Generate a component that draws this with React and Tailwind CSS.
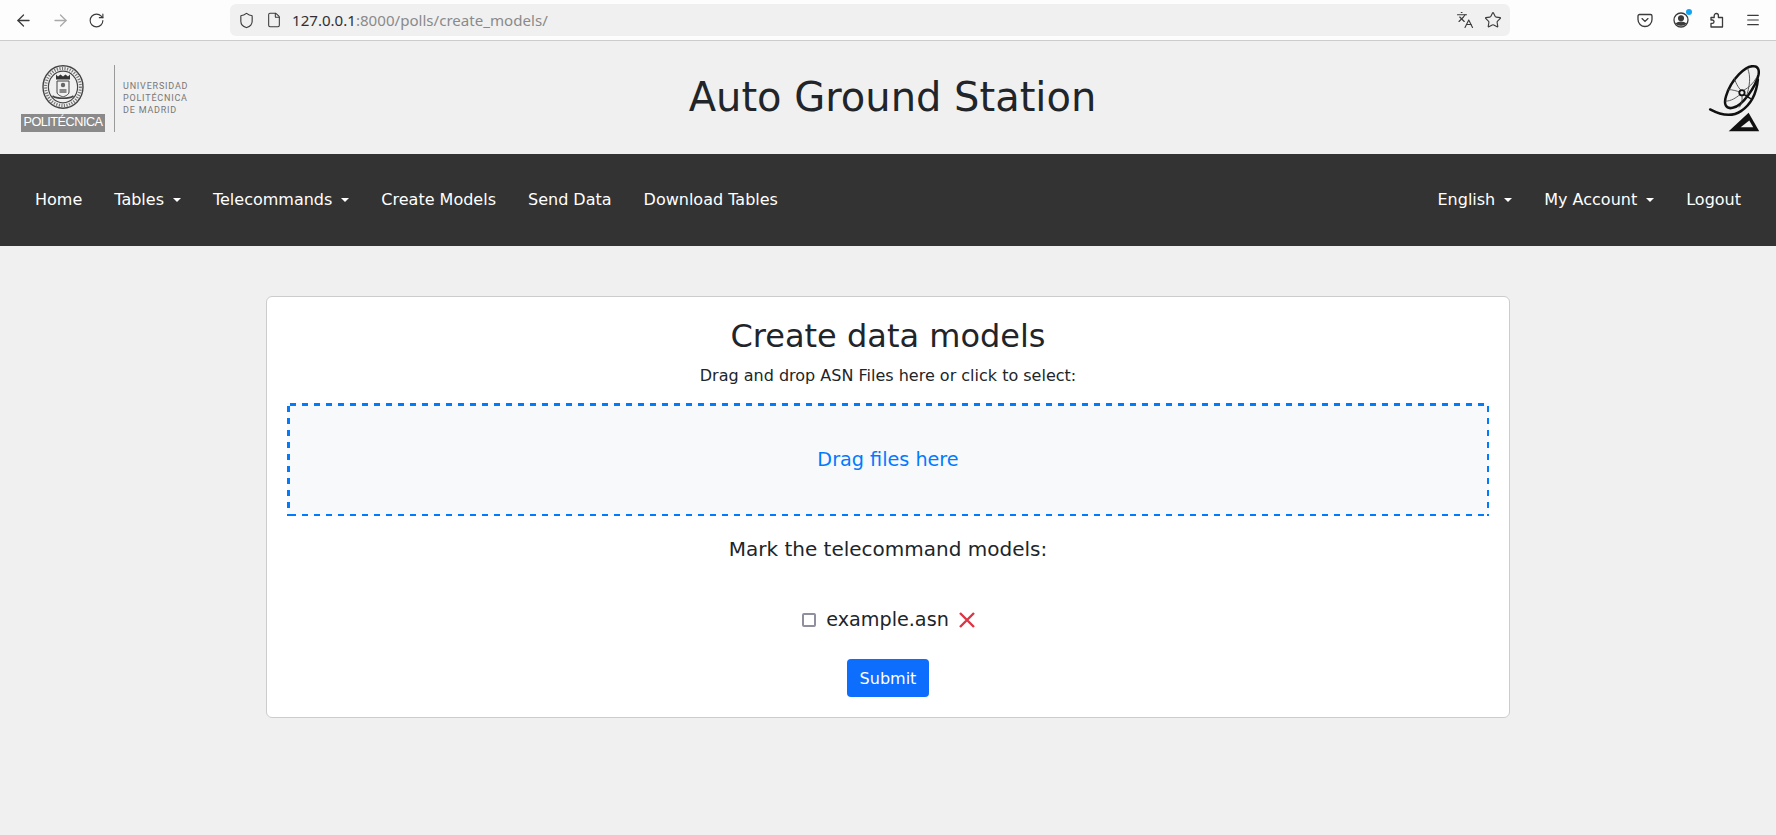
import React from 'react';
import { ArrowLeft, ArrowRight, RotateCw, Shield, File, Languages, Star, Menu } from 'lucide-react';

const dejavu = 'font-["DejaVu_Sans",sans-serif]';

const Caret = () => (
  <span className="ml-[9px] inline-block h-0 w-0 border-x-[4.8px] border-t-[4.8px] border-x-transparent border-t-white align-[3px]" />
);

const NavLink = ({ label, caret }) => (
  <a className="whitespace-nowrap text-white">
    {label}
    {caret && <Caret />}
  </a>
);

const BrowserBar = () => (
  <div className="flex h-[41px] items-center border-b border-[#cccccc] bg-[#fdfdfd] font-['Noto_Sans',sans-serif] text-[#3b3b3b]">
    <div className="flex w-[230px] shrink-0 items-center gap-[18px] pl-[14px]">
      <ArrowLeft className="h-[19px] w-[19px]" strokeWidth={1.6} />
      <ArrowRight className="h-[19px] w-[19px] text-[#a9a9a9]" strokeWidth={1.6} />
      <RotateCw className="h-[17px] w-[17px]" strokeWidth={1.6} />
    </div>
    <div className="flex h-[32px] w-[1280px] shrink-0 items-center rounded-[6px] bg-[#f0f0f0] pl-[8px] pr-[8px]">
      <Shield className="h-[17px] w-[17px]" strokeWidth={1.6} />
      <File className="ml-[11px] h-[16px] w-[16px]" strokeWidth={1.6} />
      <span className="ml-[10px] text-[15.1px] text-[#8a8a8a]">
        <span className="text-[#2f2f33]">127.0.0.1</span>:8000/polls/create_models/
      </span>
      <div className="ml-auto flex items-center gap-[10px]">
        <Languages className="h-[18px] w-[18px]" strokeWidth={1.5} />
        <Star className="h-[18px] w-[18px]" strokeWidth={1.5} />
      </div>
    </div>
    <div className="flex flex-1 items-center justify-end gap-[20px] pr-[15px]">
      <svg viewBox="0 0 16 16" className="h-[16px] w-[16px]" fill="none" stroke="currentColor" strokeWidth="1.3">
        <path d="M2.5 2.5h11A1.5 1.5 0 0 1 15 4v3.5a7 7 0 0 1-14 0V4a1.5 1.5 0 0 1 1.5-1.5z" />
        <path d="M5 6.6 8 9.4l3-2.8" strokeLinecap="round" />
      </svg>
      <div className="relative h-[16px] w-[16px]">
        <svg viewBox="0 0 16 16" className="h-[16px] w-[16px]" fill="none" stroke="currentColor" strokeWidth="1.3">
          <circle cx="8" cy="8" r="7" />
          <circle cx="8" cy="6.2" r="2.4" fill="currentColor" />
          <path d="M3.6 11.5c1.6-1.8 7.2-1.8 8.8 0-1.8 2.2-7 2.2-8.8 0z" fill="currentColor" />
        </svg>
        <span className="absolute -right-[3px] -top-[3px] h-[6px] w-[6px] rounded-full bg-[#0fa5f5]" />
      </div>
      <svg viewBox="0 0 16 16" className="h-[16px] w-[16px]" fill="none" stroke="currentColor" strokeWidth="1.3" strokeLinejoin="round">
        <path d="M2 5.5h3.2V3.6a2.1 2.1 0 0 1 4.2 0v1.9h4.1V15H2v-3.6h1.3a1.7 1.7 0 0 0 0-3.4H2z" />
      </svg>
      <Menu className="h-[16px] w-[16px]" strokeWidth={1.7} />
    </div>
  </div>
);

const UpmLogo = () => (
  <div className="flex items-stretch">
    <div className="flex w-[84px] flex-col items-center justify-between">
      <svg viewBox="0 0 42 44" className="h-[44px] w-[42px]" fill="none" stroke="#444">
        <ellipse cx="21" cy="22" rx="20" ry="21.2" strokeWidth="1.4" />
        <ellipse cx="21" cy="22" rx="14.6" ry="15.8" strokeWidth="1.2" />
        <ellipse cx="21" cy="22" rx="17.4" ry="18.6" strokeWidth="3" strokeDasharray="1.2 1.4" stroke="#777" />
        <path d="M14 9.5l2 2 2.5-2 2.5 2 2.5-2 2.5 2 2-2v5H14z" fill="#333" stroke="none" />
        <path d="M15 16h12v11c0 3-4 4-6 5-2-1-6-2-6-5z" strokeWidth="1" />
        <circle cx="21" cy="20" r="2.2" fill="#666" stroke="none" />
        <path d="M17.5 24h7v4h-7z" fill="#888" stroke="none" />
        <path d="M10.5 31c4 3 17 3 21 0" strokeWidth="1.6" />
      </svg>
      <div className="flex h-[18px] w-[84px] items-center justify-center overflow-hidden bg-[#8a8a8a] font-['Liberation_Sans',sans-serif] text-[12.7px] tracking-[-0.5px] text-white">
        POLITÉCNICA
      </div>
    </div>
    <div className="ml-[9px] h-[67px] w-px bg-[#9a9a9a]" />
    <div className="ml-[8px] flex flex-col justify-center pt-[2px] font-['Roboto',sans-serif] text-[9px] leading-[11.7px] tracking-[0.8px] text-[#777777]">
      <span>UNIVERSIDAD</span>
      <span>POLITÉCNICA</span>
      <span>DE MADRID</span>
    </div>
  </div>
);

const DishLogo = () => (
  <svg viewBox="26 26 156 202" className="h-[67px] w-[52px]" fill="none" stroke="#111">
    <path d="M32 160c28 15 63 25 93 5 30-20 47-55 51-95" strokeWidth="7.5" strokeLinecap="round" />
    <path d="M165 30C140 25 95 70 80 120c-8 25 0 40 20 35 30-5 70-65 78-100 3-15-3-25-13-25z" strokeWidth="7.5" />
    <path d="M145 36c10 24 7 54-5 89M85 100c15 0 30 5 37 8M78 135c17 0 32-10 44-20M128 120c2 15-3 30-10 35M105 65c5 20 17 35 20 37M134 102c14-8 28-20 38-38" strokeWidth="2.6" stroke="#444" />
    <circle cx="128" cy="110" r="8" strokeWidth="5.5" />
    <path d="M135 115l20 13" strokeWidth="4.5" />
    <path d="M88 226l60-56 32 56z" fill="#111" stroke="none" />
    <path d="M124 214l26-21 12 21z" fill="#f0f0f0" stroke="none" />
  </svg>
);

const App = () => {
  return (
    <div className={`flex min-h-screen flex-col bg-[#f0f0f0] text-[#212529] ${dejavu}`}>
      <BrowserBar />

      <header className="grid h-[113px] grid-cols-[1fr_auto_1fr] items-center pl-[21px] pr-[16px]">
        <div className="justify-self-start pt-[1px]">
          <UpmLogo />
        </div>
        <h1 className="mb-[2px] ml-[4px] text-[40px] leading-[48px]">Auto Ground Station</h1>
        <div className="justify-self-end pt-[1px]">
          <DishLogo />
        </div>
      </header>

      <nav className="flex h-[92px] items-center justify-between bg-[#333333] px-[35px] text-base">
        <div className="flex items-center gap-[32px]">
          <NavLink label="Home" />
          <NavLink label="Tables" caret />
          <NavLink label="Telecommands" caret />
          <NavLink label="Create Models" />
          <NavLink label="Send Data" />
          <NavLink label="Download Tables" />
        </div>
        <div className="flex items-center gap-[32px]">
          <NavLink label="English" caret />
          <NavLink label="My Account" caret />
          <NavLink label="Logout" />
        </div>
      </nav>

      <main className="flex justify-center pt-[50px]">
        <section className="flex h-[422px] w-[1244px] flex-col items-center rounded-[6px] border border-[#cccccc] bg-white px-[20px]">
          <h2 className="mt-[20px] text-[32px] leading-[38px]">Create data models</h2>
          <p className="mt-[9px] text-base leading-[24px]">Drag and drop ASN Files here or click to select:</p>
          <div className="mt-[15px] flex h-[113px] w-full items-center justify-center bg-[#f8f9fa] bg-[linear-gradient(90deg,#007bff_6px,transparent_6px),linear-gradient(90deg,#007bff_6px,transparent_6px),linear-gradient(#007bff_6px,transparent_6px),linear-gradient(#007bff_6px,transparent_6px)] bg-[length:12px_2.5px,12px_2.5px,2.5px_12px,2.5px_12px] bg-[position:3px_0,3px_100%,0_3px,100%_3px] pt-[2px] [background-repeat:repeat-x,repeat-x,repeat-y,repeat-y] text-[19.2px] text-[#007bff]">
            Drag files here
          </div>
          <p className="mt-[18px] text-[20px] leading-[30px]">Mark the telecommand models:</p>
          <div className="mt-[42px] flex h-[28px] items-center text-[19.2px]">
            <span className="ml-[1px] h-[14px] w-[14px] rounded-[2px] border-2 border-[#8f8f9d] bg-white" />
            <span className="ml-[10px]">example.asn</span>
            <svg viewBox="0 0 16 16" className="ml-[10px] h-[16px] w-[16px]" fill="none" stroke="#dc3545" strokeWidth="2.4">
              <path d="M1 1l14 14M15 1 1 15" />
            </svg>
          </div>
          <button className="mt-[25px] h-[38px] w-[82px] rounded-[4px] bg-[#0d6efd] pt-[1px] text-base text-white">Submit</button>
        </section>
      </main>
    </div>
  );
};

export default App;
